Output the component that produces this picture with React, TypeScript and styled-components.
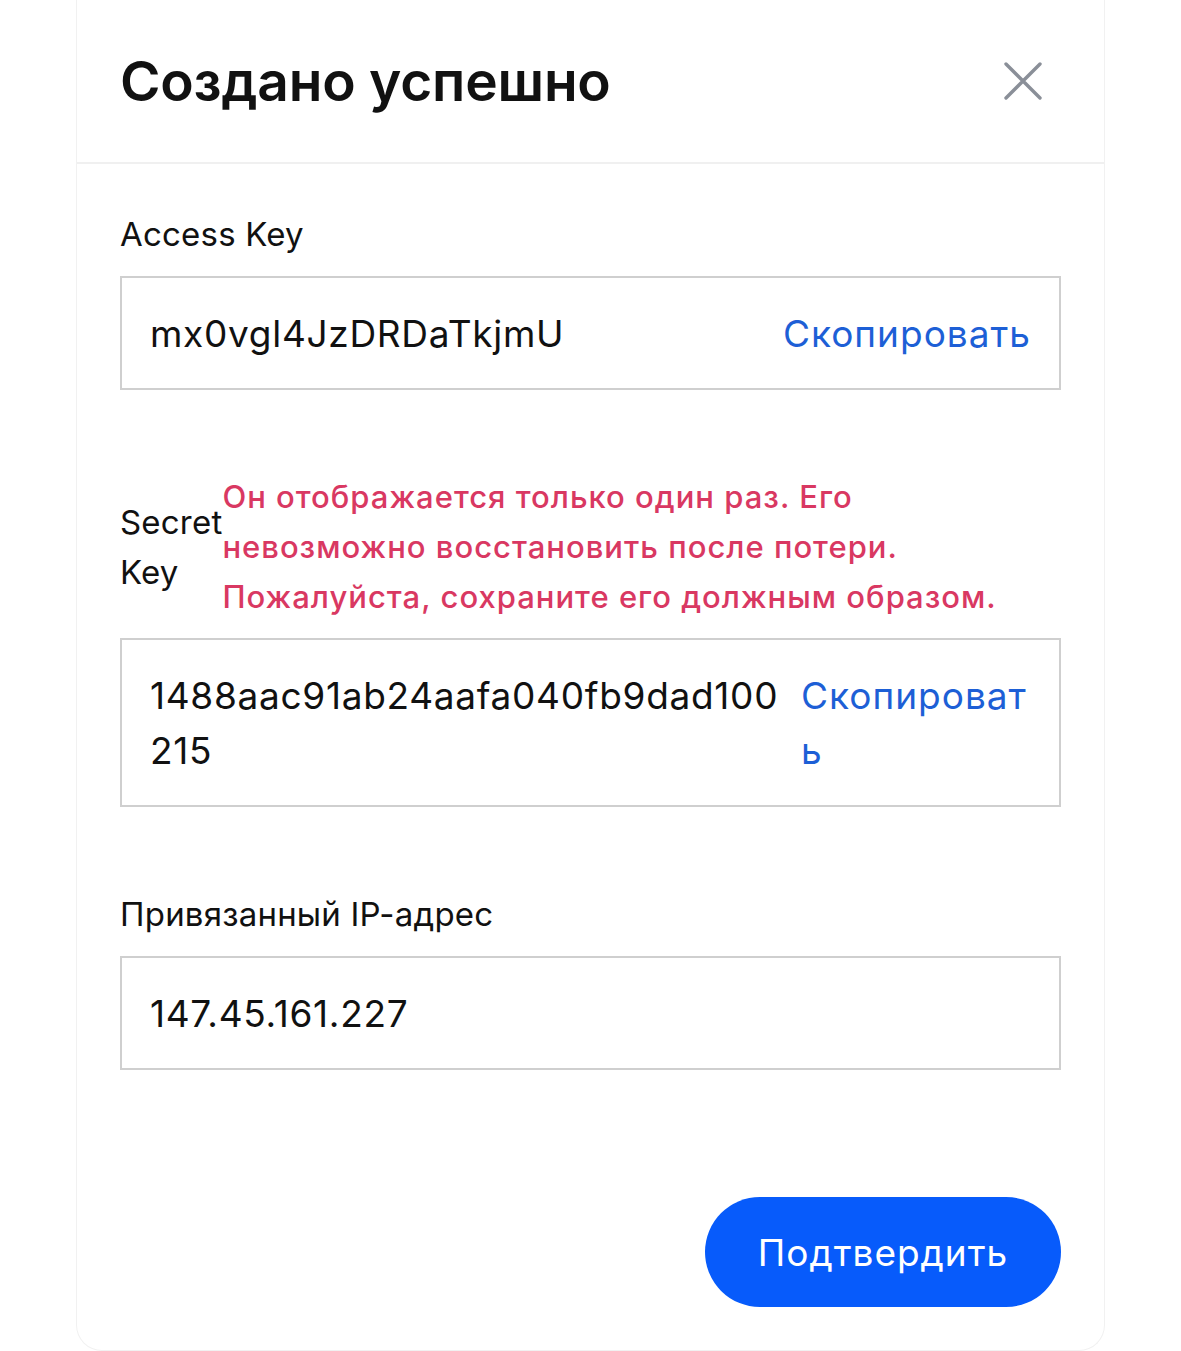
import React from "react";
import styled, { createGlobalStyle } from "styled-components";

const GlobalStyle = createGlobalStyle`
  html, body {
    margin: 0;
    padding: 0;
    background: #ffffff;
  }
  body {
    font-family: Inter, "Noto Sans", "Liberation Sans", sans-serif;
    color: #111111;
  }
  * {
    box-sizing: border-box;
  }
`;

interface KeyFieldProps {
  value: string;
  copy?: boolean;
  narrowCopy?: boolean;
}

const KeyField = ({ value, copy, narrowCopy }: KeyFieldProps) => {
  return (
    <Field>
      <FieldValue>{value}</FieldValue>
      {copy && <CopyButton $narrow={narrowCopy}>Скопировать</CopyButton>}
    </Field>
  );
};

const App = () => {
  return (
    <Page>
      <GlobalStyle />
      <Card>
        <Header>
          <Title>Создано успешно</Title>
          <CloseButton aria-label="close">
            <svg width="40" height="40" viewBox="0 0 40 40" fill="none">
              <path
                d="M3 3L37 37M37 3L3 37"
                stroke="#8a8f98"
                strokeWidth="3.4"
                strokeLinecap="round"
              />
            </svg>
          </CloseButton>
        </Header>

        <Body>
          <Section>
            <Label>Access Key</Label>
            <KeyField value="mx0vgl4JzDRDaTkjmU" copy />
          </Section>

          <Section $top={82} $gap={16}>
            <SecretRow>
              <SecretLabel>Secret Key</SecretLabel>
              <Warning>
                Он отображается только один раз. Его
                <br />
                невозможно восстановить после потери.
                <br />
                Пожалуйста, сохраните его должным образом.
              </Warning>
            </SecretRow>
            <KeyField value="1488aac91ab24aafa040fb9dad100215" copy narrowCopy />
          </Section>

          <Section $top={87}>
            <Label>Привязанный IP-адрес</Label>
            <KeyField value="147.45.161.227" />
          </Section>

          <Footer>
            <ConfirmButton>Подтвердить</ConfirmButton>
          </Footer>
        </Body>
      </Card>
    </Page>
  );
};

const Page = styled.div`
  width: 1181px;
  min-height: 1351px;
  padding-left: 76px;
`;

const Card = styled.div`
  width: 1029px;
  height: 1351px;
  background: #ffffff;
  border: 1px solid #f1f1f1;
  border-top: none;
  border-radius: 0 0 26px 26px;
  display: flex;
  flex-direction: column;
`;

const Header = styled.div`
  height: 164px;
  flex-shrink: 0;
  display: flex;
  align-items: center;
  justify-content: space-between;
  padding: 0 61px 0 43px;
  border-bottom: 2px solid #f0f0f0;
`;

const Title = styled.h1`
  margin: 0;
  font-size: 55px;
  font-weight: 600;
  letter-spacing: -0.2px;
  color: #111111;
`;

const CloseButton = styled.button`
  border: none;
  background: none;
  padding: 0;
  display: flex;
  cursor: pointer;
`;

const Body = styled.div`
  flex: 1;
  display: flex;
  flex-direction: column;
  padding: 0 43px;
`;

const Section = styled.div<{ $top?: number; $gap?: number }>`
  display: flex;
  flex-direction: column;
  gap: ${(p) => p.$gap ?? 22}px;
  margin-top: ${(p) => p.$top ?? 50}px;
`;

const Label = styled.div`
  font-size: 33px;
  line-height: 40px;
  letter-spacing: 0.2px;
  color: #111111;
`;

const SecretRow = styled.div`
  display: flex;
  align-items: center;
`;

const SecretLabel = styled.div`
  width: min-content;
  flex-shrink: 0;
  font-size: 33px;
  line-height: 50px;
  letter-spacing: 0.2px;
  color: #111111;
`;

const Warning = styled.div`
  font-size: 31px;
  font-weight: 500;
  line-height: 50px;
  letter-spacing: 1px;
  white-space: nowrap;
  color: #d93862;
`;

const Field = styled.div`
  display: flex;
  align-items: flex-start;
  gap: 8px;
  padding: 28px 28px 27px 28px;
  border: 2px solid #cfcfcf;
`;

const FieldValue = styled.div`
  flex: 1;
  min-width: 0;
  font-size: 37px;
  line-height: 55px;
  letter-spacing: 0.7px;
  word-break: break-all;
  color: #111111;
`;

const CopyButton = styled.button<{ $narrow?: boolean }>`
  border: none;
  background: none;
  padding: 0;
  font-family: inherit;
  font-size: 37px;
  line-height: 55px;
  letter-spacing: 1px;
  color: #1d5fd6;
  text-align: left;
  cursor: pointer;
  flex-shrink: 0;
  ${(p) => (p.$narrow ? "width: 230px; word-break: break-all;" : "")}
`;

const Footer = styled.div`
  display: flex;
  justify-content: flex-end;
  margin-top: 127px;
`;

const ConfirmButton = styled.button`
  width: 356px;
  height: 110px;
  border: none;
  border-radius: 55px;
  background: #075bfb;
  color: #ffffff;
  font-family: inherit;
  font-size: 37px;
  letter-spacing: 1px;
  cursor: pointer;
`;

export default App;
